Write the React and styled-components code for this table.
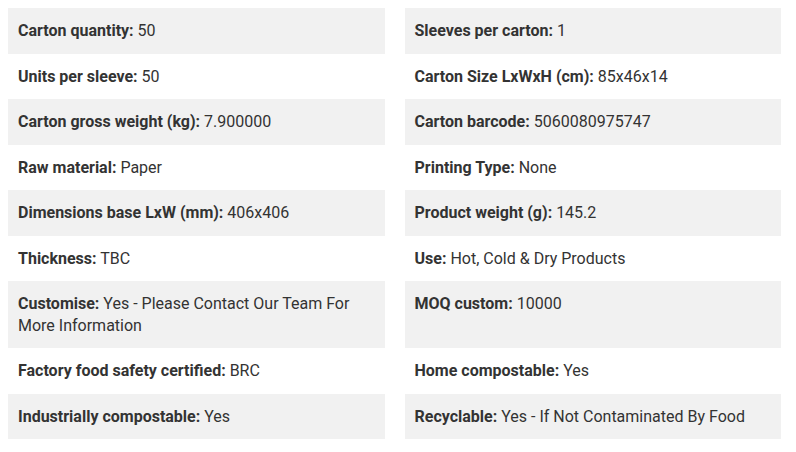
import React from 'react';
import styled, { createGlobalStyle } from 'styled-components';

const GlobalStyle = createGlobalStyle`
  body {
    margin: 8px;
    background: #fff;
    font-family: Roboto, 'Liberation Sans', sans-serif;
    color: #333;
  }
`;

const Specs = styled.div`
  display: grid;
  grid-template-columns: 1fr 1fr;
  column-gap: 20px;
  width: 773px;
`;

const Cell = styled.div`
  background: ${(p) => (p.shaded ? '#f1f1f1' : '#fff')};
  padding: 12px 10px;
  font-size: 16px;
  line-height: 21.5px;
`;

const Label = styled.strong`
  font-weight: 700;
`;

const rows = [
  ['Carton quantity', '50', 'Sleeves per carton', '1'],
  ['Units per sleeve', '50', 'Carton Size LxWxH (cm)', '85x46x14'],
  ['Carton gross weight (kg)', '7.900000', 'Carton barcode', '5060080975747'],
  ['Raw material', 'Paper', 'Printing Type', 'None'],
  ['Dimensions base LxW (mm)', '406x406', 'Product weight (g)', '145.2'],
  ['Thickness', 'TBC', 'Use', 'Hot, Cold & Dry Products'],
  ['Customise', 'Yes - Please Contact Our Team For More Information', 'MOQ custom', '10000'],
  ['Factory food safety certified', 'BRC', 'Home compostable', 'Yes'],
  ['Industrially compostable', 'Yes', 'Recyclable', 'Yes - If Not Contaminated By Food'],
];

export default function App() {
  return (
    <>
      <GlobalStyle />
      <Specs>
        {rows.map(([l1, v1, l2, v2], i) => (
          <React.Fragment key={l1}>
            <Cell shaded={i % 2 === 0}>
              <Label>{l1}:</Label> {v1}
            </Cell>
            <Cell shaded={i % 2 === 0}>
              <Label>{l2}:</Label> {v2}
            </Cell>
          </React.Fragment>
        ))}
      </Specs>
    </>
  );
}
